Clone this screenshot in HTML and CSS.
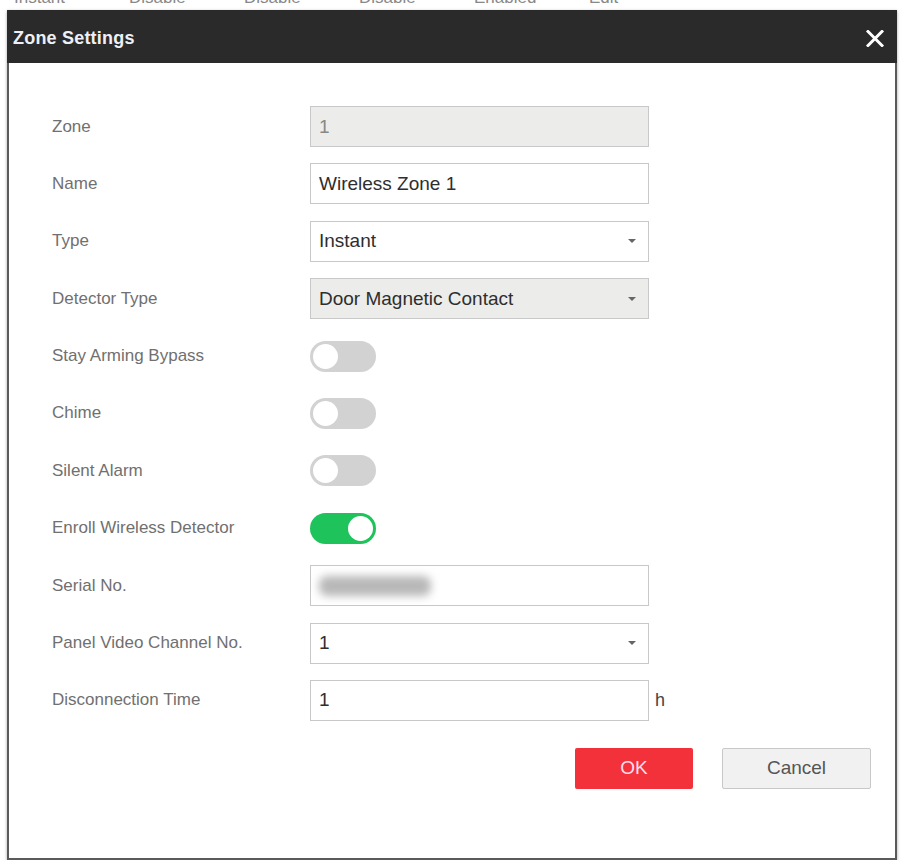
FILE: index.html
```html
<!DOCTYPE html>
<html lang="en">
<head>
    <meta charset="UTF-8">
    <meta name="viewport" content="width=device-width, initial-scale=1.0">
    <title>Zone Settings</title>
    <link rel="stylesheet" href="styles.css">
</head>
<body>

    <!-- table row behind the dialog, mostly covered -->
    <div class="behind">
        <div class="behind-row">
            <span>Instant</span>
            <span>Disable</span>
            <span>Disable</span>
            <span>Disable</span>
            <span>Enabled</span>
            <span>Edit</span>
        </div>
    </div>

    <div class="dialog">
        <div class="dialog-head">
            <span class="dialog-title">Zone Settings</span>
            <svg class="close" width="18" height="17" viewBox="0 0 18 17">
                <path d="M2 1.5 L16 15.5 M16 1.5 L2 15.5" stroke="#fff" stroke-width="3" stroke-linecap="square"/>
            </svg>
        </div>

        <div class="dialog-body">
            <div class="form">
                <label>Zone</label>
                <div class="field disabled"><span class="muted">1</span></div>

                <label>Name</label>
                <div class="field">Wireless Zone 1</div>

                <label>Type</label>
                <div class="field select">Instant<span class="caret"></span></div>

                <label>Detector Type</label>
                <div class="field select disabled">Door Magnetic Contact<span class="caret"></span></div>

                <label>Stay Arming Bypass</label>
                <div class="cell"><span class="toggle"></span></div>

                <label>Chime</label>
                <div class="cell"><span class="toggle"></span></div>

                <label>Silent Alarm</label>
                <div class="cell"><span class="toggle"></span></div>

                <label>Enroll Wireless Detector</label>
                <div class="cell"><span class="toggle on"></span></div>

                <label>Serial No.</label>
                <div class="field"><span class="blurred"></span></div>

                <label>Panel Video Channel No.</label>
                <div class="field select">1<span class="caret"></span></div>

                <label>Disconnection Time</label>
                <div class="cell">
                    <div class="field">1</div>
                    <span class="unit">h</span>
                </div>
            </div>

            <div class="actions">
                <button class="btn ok">OK</button>
                <button class="btn cancel">Cancel</button>
            </div>
        </div>
    </div>

</body>
</html>
```

FILE: styles.css
```css
body {
    margin: 0;
    background-color: #fff;
    font-family: 'Liberation Sans', Arial, sans-serif;
    color: #333;
}

.behind {
    height: 10px;
    overflow: hidden;
}

.behind-row {
    display: flex;
    margin-top: -12px;
    padding-left: 14px;
    font-size: 17px;
    color: #888;
}

.behind-row span { width: 115px; }

.dialog {
    margin: 0 7px;
    box-shadow: 0 1px 3px rgba(0,0,0,0.35);
}

.dialog-head {
    height: 53px;
    background-color: #2a2a2a;
    display: flex;
    align-items: center;
    justify-content: space-between;
    padding: 0 12px 0 6px;
}

.dialog-title {
    color: #eef0f6;
    font-weight: bold;
    font-size: 18px;
    letter-spacing: 0.2px;
    padding-top: 4px;
}

.close {
    margin-top: 4px;
    margin-right: 1px;
}

.dialog-body {
    border: 2px solid #5a5a5a;
    border-top: none;
    height: 797px;
    box-sizing: border-box;
    padding: 43px 24px 0 43px;
}

.form {
    display: grid;
    grid-template-columns: 258px 339px;
    grid-auto-rows: 41px;
    row-gap: 16.4px;
    align-items: center;
}

.form label {
    font-size: 17px;
    color: #707070;
}

.field {
    height: 41px;
    box-sizing: border-box;
    border: 1px solid #c8c8c8;
    background-color: #fff;
    display: flex;
    align-items: center;
    padding: 0 8px;
    font-size: 19px;
    color: #2e2e2e;
}

.field.disabled { background-color: #ececea; }

.muted { color: #888; }

.select { justify-content: space-between; }

.caret {
    width: 0;
    height: 0;
    border-left: 4px solid transparent;
    border-right: 4px solid transparent;
    border-top: 4px solid #666;
    margin-right: 4px;
}

.cell {
    display: flex;
    align-items: center;
}

.cell .field {
    flex: none;
    width: 339px;
}

.unit {
    margin-left: 6px;
    font-size: 18px;
    color: #444;
}

.toggle {
    width: 66px;
    height: 31px;
    border-radius: 16px;
    background-color: #d2d2d2;
    display: flex;
    align-items: center;
    padding: 0 3px;
    box-sizing: border-box;
}

.toggle::after {
    content: '';
    width: 25px;
    height: 25px;
    border-radius: 50%;
    background-color: #fff;
}

.toggle.on {
    background-color: #1fc35c;
    justify-content: flex-end;
}

.blurred {
    width: 112px;
    height: 20px;
    border-radius: 8px;
    background-color: #b8b8b8;
    filter: blur(4px);
}

.actions {
    display: flex;
    justify-content: flex-end;
    gap: 29px;
    margin-top: 27px;
}

.btn {
    height: 41px;
    border-radius: 2px;
    font-family: 'Liberation Sans', Arial, sans-serif;
    font-size: 19px;
    cursor: pointer;
}

.ok {
    width: 118px;
    border: none;
    background-color: #f2313b;
    color: #fde;
}

.cancel {
    width: 149px;
    border: 1px solid #c8c8c8;
    background-color: #f1f1f1;
    color: #555;
}
```
